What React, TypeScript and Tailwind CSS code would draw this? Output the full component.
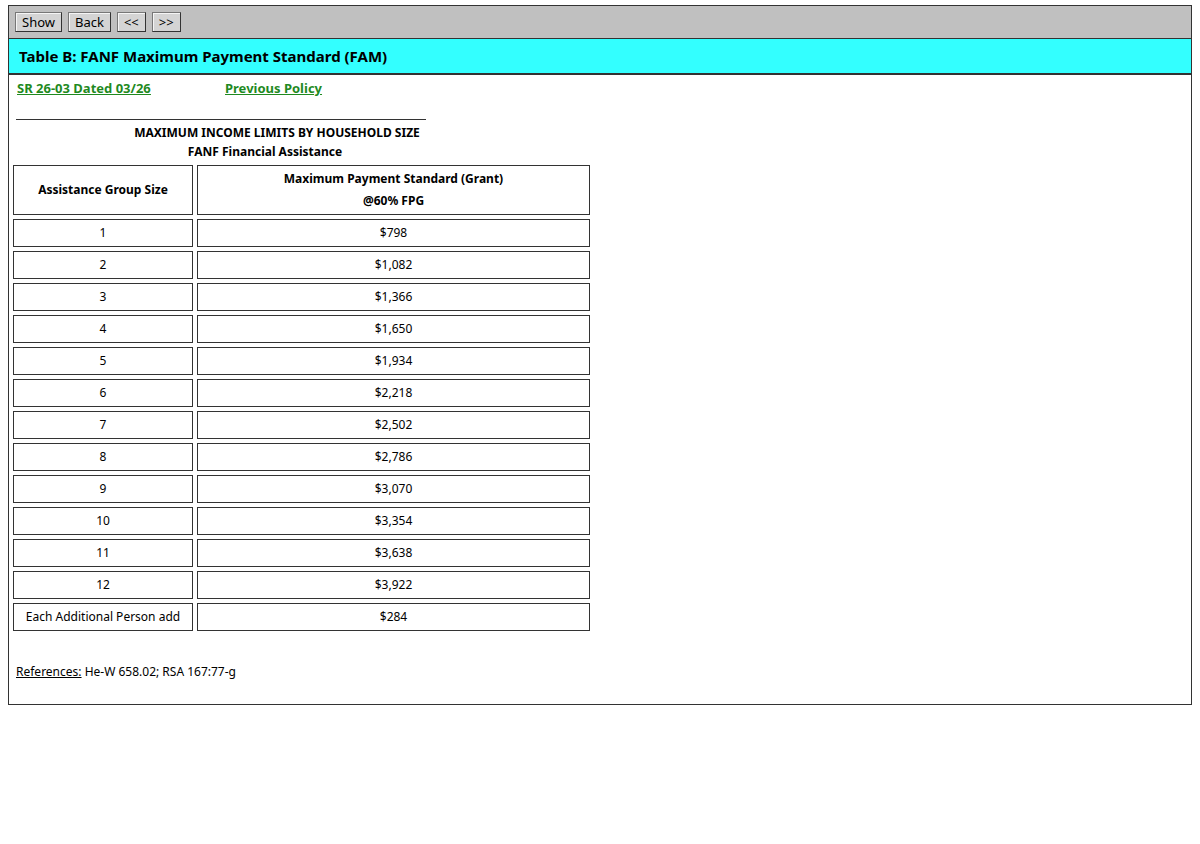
import React from "react";

const rows = [
  ["1", "$798"],
  ["2", "$1,082"],
  ["3", "$1,366"],
  ["4", "$1,650"],
  ["5", "$1,934"],
  ["6", "$2,218"],
  ["7", "$2,502"],
  ["8", "$2,786"],
  ["9", "$3,070"],
  ["10", "$3,354"],
  ["11", "$3,638"],
  ["12", "$3,922"],
];

const Btn = ({ label }: { label: string }) => (
  <button className="h-[20px] px-[6px] bg-[#d4d4d4] border border-[#777] border-b-[#333] border-r-[#333] text-[13px] leading-none text-black shadow-[inset_1px_1px_0_#f5f5f5]">
    {label}
  </button>
);

const App = () => {
  return (
    <div className="bg-white min-h-[844px] pt-[5px] px-[8px] font-['Liberation_Sans',Arial,sans-serif] text-black">
      <div className="border border-[#333] h-[700px]">
        <div className="bg-[#c0c0c0] h-[33px] flex items-center gap-[6px] px-[6px] border-b border-[#333]">
          <Btn label="Show" />
          <Btn label="Back" />
          <Btn label="<<" />
          <Btn label=">>" />
        </div>
        <div className="bg-[#33ffff] h-[36px] flex items-center px-[10px] border-b-2 border-[#333] text-[15px] font-bold">
          Table B: FANF Maximum Payment Standard (FAM)
        </div>
        <div className="flex text-[13px] font-bold text-[#1f8a1f] underline pl-[8px] mt-[4px]">
          <a className="w-[208px]">SR 26-03 Dated 03/26</a>
          <a>Previous Policy</a>
        </div>
        <div className="ml-[7px] w-[410px] mt-[20px] border-t border-[#333]"></div>
        <div className="ml-[118px] w-[300px] text-[12px] font-bold leading-[19px] mt-[3px] flex flex-col items-center">
          <div>MAXIMUM INCOME LIMITS BY HOUSEHOLD SIZE</div>
          <div className="mr-[24px]">FANF Financial Assistance</div>
        </div>
        <table className="border-separate border-spacing-[4px] text-[12px] w-[585px]">
          <tbody>
            <tr>
              <td className="w-[180px] h-[50px] border border-[#333] text-center font-bold">Assistance Group Size</td>
              <td className="border border-[#333] text-center font-bold leading-[22px]">
                Maximum Payment Standard (Grant)
                <br />
                @60% FPG
              </td>
            </tr>
            {rows.map(([s, v]) => (
              <tr key={s}>
                <td className="h-[28px] border border-[#333] text-center">{s}</td>
                <td className="border border-[#333] text-center">{v}</td>
              </tr>
            ))}
            <tr>
              <td className="h-[28px] border border-[#333] text-center">Each Additional Person add</td>
              <td className="border border-[#333] text-center">$284</td>
            </tr>
          </tbody>
        </table>
        <div className="text-[12px] ml-[7px] mt-[28px]">
          <span className="underline">References:</span> He-W 658.02; RSA 167:77-g
        </div>
      </div>
    </div>
  );
};

export default App;
